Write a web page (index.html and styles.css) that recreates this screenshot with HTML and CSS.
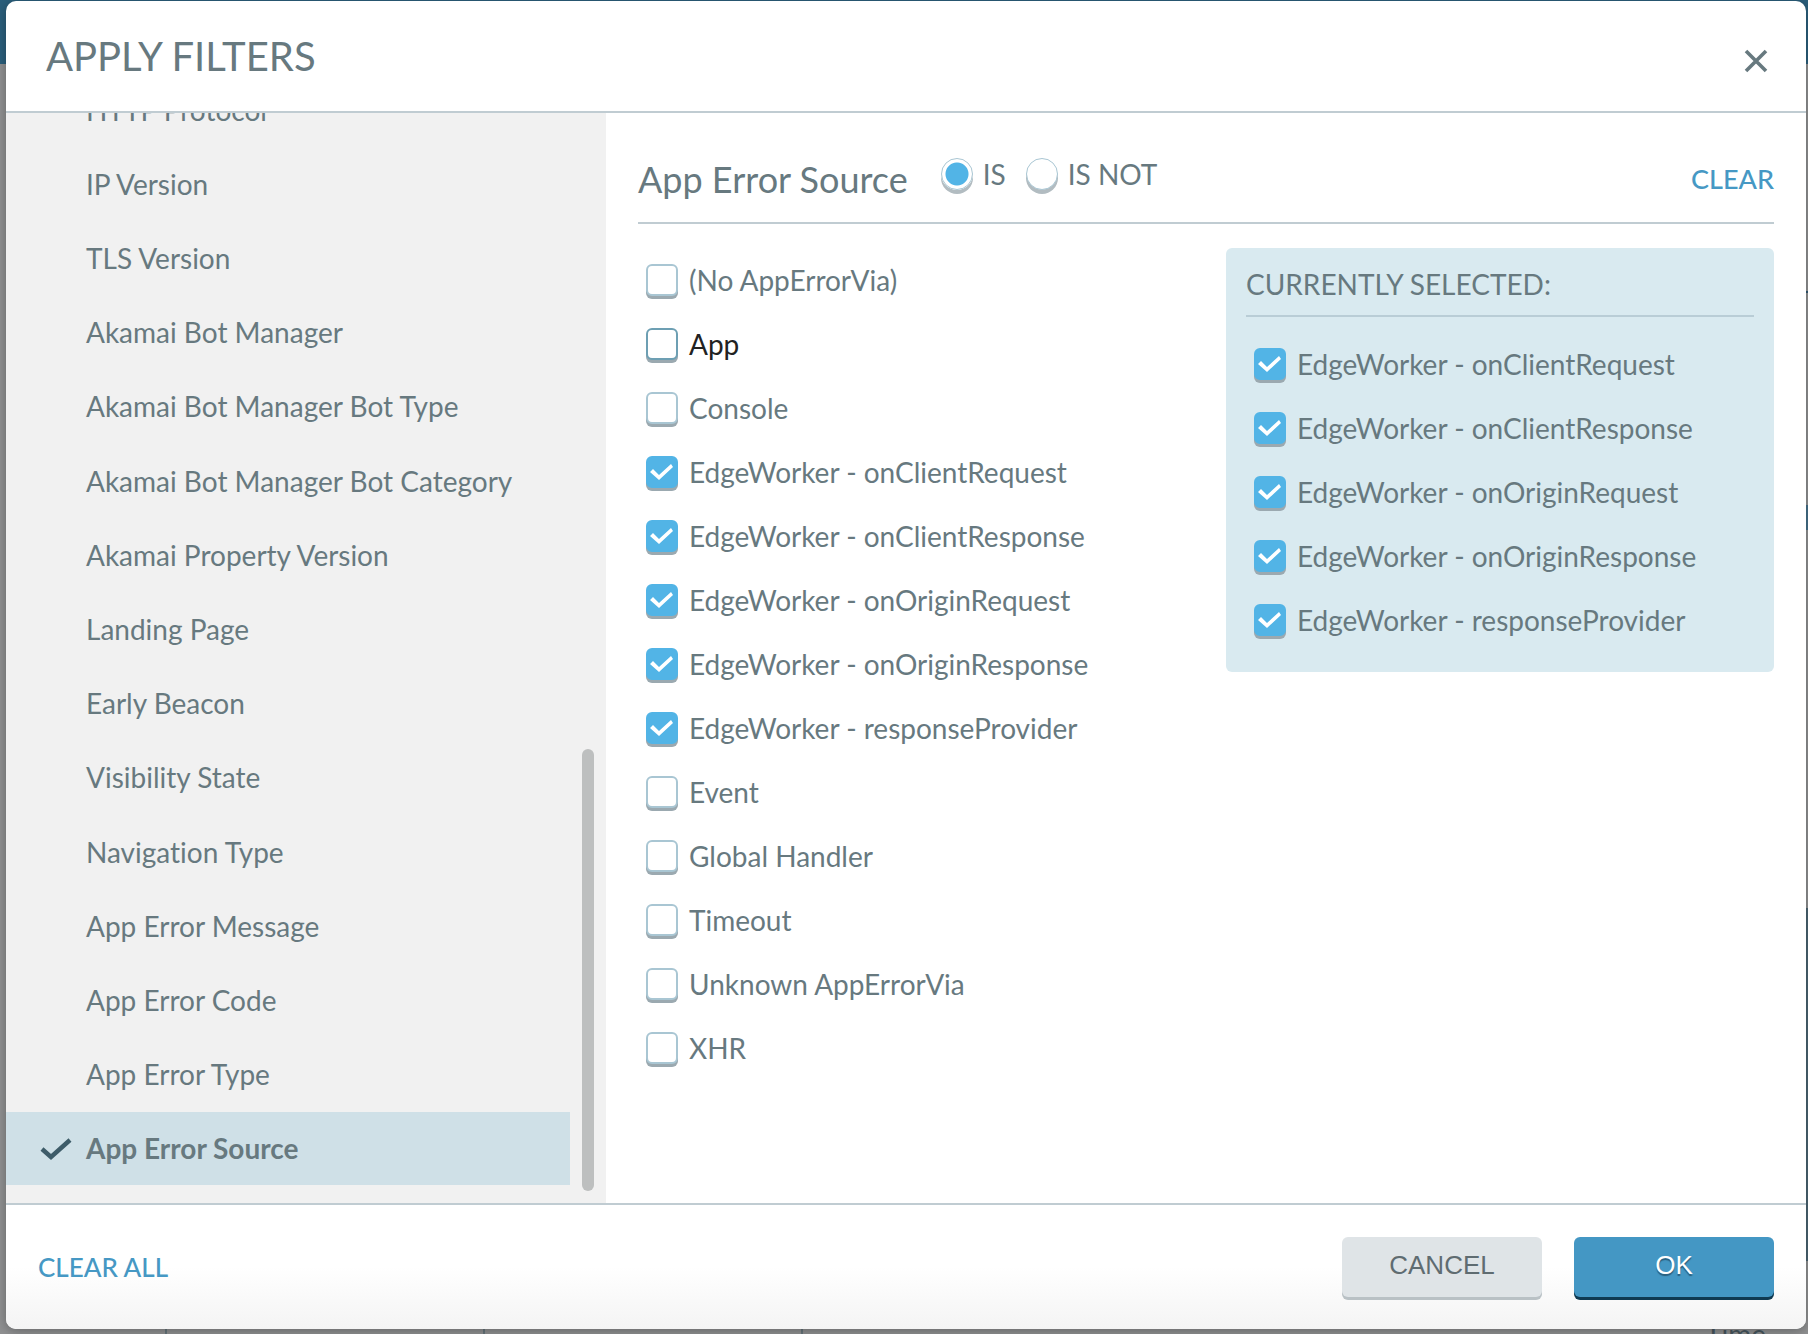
FILE: index.html
```html
<!DOCTYPE html>
<html lang="en">
<head>
<meta charset="utf-8">
<title>Apply Filters</title>
<link rel="stylesheet" href="styles.css">
</head>
<body>
<div class="backdrop" aria-hidden="true">
  <div class="backdrop-bar"></div>
  <div class="backdrop-chart"></div>
  <div class="backdrop-table"><span></span><span></span><span></span><span class="backdrop-time">Time</span></div>
</div>
<section class="dialog" role="dialog" aria-labelledby="dialog-title">
  <header class="dialog-header">
    <h1 class="dialog-title" id="dialog-title">APPLY FILTERS</h1>
    <button class="close" type="button" aria-label="Close">
      <svg viewBox="0 0 24 24" width="24" height="24" fill="none" stroke="currentColor" stroke-width="3.6"><path d="M2 2 22 22M22 2 2 22"/></svg>
    </button>
  </header>
  <div class="dialog-body">
    <nav class="sidebar" aria-label="Filters">
      <ul class="filters">
        <li><a class="filter" href="#">HTTP Protocol</a></li>
        <li><a class="filter" href="#">IP Version</a></li>
        <li><a class="filter" href="#">TLS Version</a></li>
        <li><a class="filter" href="#">Akamai Bot Manager</a></li>
        <li><a class="filter" href="#">Akamai Bot Manager Bot Type</a></li>
        <li><a class="filter" href="#">Akamai Bot Manager Bot Category</a></li>
        <li><a class="filter" href="#">Akamai Property Version</a></li>
        <li><a class="filter" href="#">Landing Page</a></li>
        <li><a class="filter" href="#">Early Beacon</a></li>
        <li><a class="filter" href="#">Visibility State</a></li>
        <li><a class="filter" href="#">Navigation Type</a></li>
        <li><a class="filter" href="#">App Error Message</a></li>
        <li><a class="filter" href="#">App Error Code</a></li>
        <li><a class="filter" href="#">App Error Type</a></li>
        <li><a class="filter filter-active" href="#" aria-current="true"><svg class="filter-tick" viewBox="0 0 32 26" width="32" height="26" fill="none" stroke="currentColor" stroke-width="4.4"><path d="M2 14 11 22 30 5"/></svg>App Error Source</a></li>
      </ul>
      <div class="scroll-track"><div class="scroll-thumb"></div></div>
    </nav>
    <main class="panel">
      <div class="panel-head">
        <h2 class="panel-title">App Error Source</h2>
        <div class="modes" role="radiogroup" aria-label="Match mode">
          <label class="mode"><input class="radio" type="radio" name="mode" checked>IS</label>
          <label class="mode"><input class="radio" type="radio" name="mode">IS NOT</label>
        </div>
        <a class="action action-panel" href="#">CLEAR</a>
      </div>
      <div class="columns">
        <div class="options">
          <label class="option"><input class="check" type="checkbox">(No AppErrorVia)</label>
          <label class="option option-hover"><input class="check" type="checkbox">App</label>
          <label class="option"><input class="check" type="checkbox">Console</label>
          <label class="option"><input class="check" type="checkbox" checked>EdgeWorker - onClientRequest</label>
          <label class="option"><input class="check" type="checkbox" checked>EdgeWorker - onClientResponse</label>
          <label class="option"><input class="check" type="checkbox" checked>EdgeWorker - onOriginRequest</label>
          <label class="option"><input class="check" type="checkbox" checked>EdgeWorker - onOriginResponse</label>
          <label class="option"><input class="check" type="checkbox" checked>EdgeWorker - responseProvider</label>
          <label class="option"><input class="check" type="checkbox">Event</label>
          <label class="option"><input class="check" type="checkbox">Global Handler</label>
          <label class="option"><input class="check" type="checkbox">Timeout</label>
          <label class="option"><input class="check" type="checkbox">Unknown AppErrorVia</label>
          <label class="option"><input class="check" type="checkbox">XHR</label>
        </div>
        <aside class="selected">
          <h3 class="selected-title">CURRENTLY SELECTED:</h3>
          <div class="options">
            <label class="option"><input class="check" type="checkbox" checked>EdgeWorker - onClientRequest</label>
            <label class="option"><input class="check" type="checkbox" checked>EdgeWorker - onClientResponse</label>
            <label class="option"><input class="check" type="checkbox" checked>EdgeWorker - onOriginRequest</label>
            <label class="option"><input class="check" type="checkbox" checked>EdgeWorker - onOriginResponse</label>
            <label class="option"><input class="check" type="checkbox" checked>EdgeWorker - responseProvider</label>
          </div>
        </aside>
      </div>
    </main>
  </div>
  <footer class="dialog-footer">
    <a class="action" href="#">CLEAR ALL</a>
    <div class="buttons">
      <button class="button" type="button">CANCEL</button>
      <button class="button button-primary" type="button">OK</button>
    </div>
  </footer>
</section>
</body>
</html>
```
FILE: styles.css
```css
* {
  box-sizing: border-box;
}

body {
  margin: 0;
  height: 100vh;
  padding: 1px 2px 5px 6px;
  overflow: hidden;
  font: 28px/36px Lato, sans-serif;
  font-variant-ligatures: none;
  color: #67797f;
}

h1, h2, h3, ul {
  margin: 0;
  padding: 0;
  font-weight: 400;
  list-style: none;
}

.backdrop {
  position: absolute;
  inset: 0;
  z-index: -1;
  display: flex;
  flex-direction: column;
  overflow: hidden;
  background: #909192;
}

.backdrop-bar {
  flex: none;
  height: 64px;
  background: #2b5f7c;
}

.backdrop-chart {
  flex: 1;
  align-self: flex-end;
  width: 2px;
  background: linear-gradient(
    transparent 18%, #2f5872 18%, #2f5872 18.2%, transparent 18.2%,
    transparent 35%, #44708a 35%, #44708a 37%, transparent 37%,
    transparent 67%, #4a6472 67%, #4a6472 95%, transparent 95%);
}

.backdrop-table {
  display: grid;
  flex: none;
  grid-template-columns: 167px 318px 318px 1fr;
  height: 10px;
  color: #46565e;
}

.backdrop-table span {
  border-right: 2px solid #66757b;
}

.backdrop-table .backdrop-time {
  height: 36px;
  margin-top: -8px;
  padding-right: 42px;
  border: 0;
  text-align: right;
}

.dialog {
  display: flex;
  flex-direction: column;
  height: 100%;
  overflow: hidden;
  background: #fff;
  border-radius: 10px;
  box-shadow: 0 2px 12px rgba(0, 0, 0, 0.3);
}

.dialog-header {
  display: flex;
  align-items: center;
  justify-content: space-between;
  height: 112px;
  flex: none;
  padding: 0 38px 0 40px;
  border-bottom: 2px solid #c0ccd2;
}

.dialog-title {
  font-size: 40px;
  line-height: 48px;
}

.close {
  display: flex;
  margin-top: 10px;
  padding: 0;
  border: 0;
  background: none;
  color: #67797f;
}

.dialog-body {
  display: grid;
  grid-template-columns: 600px 1fr;
  flex: 1;
  min-height: 0;
}

.sidebar {
  display: flex;
  min-height: 0;
  overflow: hidden;
  background: #f1f1f1;
}

.filters {
  display: flex;
  flex: 1;
  flex-direction: column;
  justify-content: space-between;
  margin: -40px 0 18px;
}

.filter {
  display: flex;
  align-items: center;
  height: 73px;
  padding-left: 80px;
  color: inherit;
  text-decoration: none;
}

.filter-active {
  gap: 14px;
  padding-left: 34px;
  background: #cfe0e7;
  font-weight: 700;
}

.filter-tick {
  color: #3e5c69;
}

.scroll-track {
  display: flex;
  flex-direction: column;
  justify-content: flex-end;
  padding: 12px;
}

.scroll-thumb {
  width: 12px;
  height: 442px;
  border-radius: 6px;
  background: #bdbfbf;
}

.panel {
  padding: 0 32px;
}

.panel-head {
  display: flex;
  align-items: center;
  height: 111px;
  padding-top: 22px;
  border-bottom: 2px solid #c0ccd2;
}

.panel-title {
  font-size: 36px;
  line-height: 44px;
}

.modes {
  display: flex;
  gap: 20px;
  margin: 0 auto 10px 33px;
}

.mode {
  display: flex;
  align-items: center;
  gap: 10px;
}

.radio {
  appearance: none;
  width: 32px;
  height: 32px;
  margin: 0;
  border: 1px solid #a9c6d3;
  border-radius: 50%;
  background: #fff;
  box-shadow: 0 4px 0 #b2bcc1;
}

.radio:checked {
  background: radial-gradient(circle, #52b4e6 11px, #fff 12px);
}

.action {
  color: #4698c4;
  font-size: 26px;
  font-weight: 500;
  text-decoration: none;
}

.action-panel {
  font-size: 27px;
}

.columns {
  display: grid;
  grid-template-columns: 1fr 548px;
  align-items: start;
  gap: 40px;
  padding-top: 24px;
}

.options {
  display: flex;
  flex-direction: column;
  padding-left: 8px;
}

.option {
  display: flex;
  align-items: center;
  gap: 11px;
  height: 64px;
}

.option-hover {
  color: #222;
}

.check {
  appearance: none;
  display: grid;
  place-items: center;
  width: 32px;
  height: 32px;
  margin: 0;
  border: 2px solid #a9c6d3;
  border-radius: 6px;
  background: #fff;
  box-shadow: 0 3px 0 #9ba9b0;
}

.option-hover .check {
  border-color: #6d9fb3;
}

.check:checked {
  border-color: #52b4e6;
  background: #52b4e6;
}

.check:checked::before {
  content: "";
  width: 24px;
  height: 18px;
  background: #fff;
  clip-path: polygon(0 9px, 3px 6px, 9px 12px, 21px 1px, 23px 4px, 9px 17px);
}

.selected {
  padding: 18px 20px 20px;
  border-radius: 6px;
  background: #d9eaf0;
}

.selected-title {
  margin-bottom: 15px;
  padding-bottom: 13px;
  border-bottom: 2px solid #b9cdd6;
  font-size: 28px;
}

.dialog-footer {
  display: flex;
  align-items: center;
  justify-content: space-between;
  height: 126px;
  flex: none;
  padding: 0 32px;
  border-top: 2px solid #c0ccd2;
  background: linear-gradient(#fff 50%, #f4f4f4);
}

.buttons {
  display: flex;
  gap: 32px;
}

.button {
  width: 200px;
  height: 60px;
  padding: 0 0 4px;
  border: 0;
  border-radius: 6px;
  background: #dfe4e7;
  box-shadow: 0 3px 0 #b9c1c5;
  color: #5f6c71;
  font: 26px/32px "Liberation Sans", sans-serif;
}

.button-primary {
  background: #4497c4;
  box-shadow: 0 3px 0 #0f3a52;
  color: #fff;
  text-shadow: 0 2px 1px #2a5f7e;
}
```
